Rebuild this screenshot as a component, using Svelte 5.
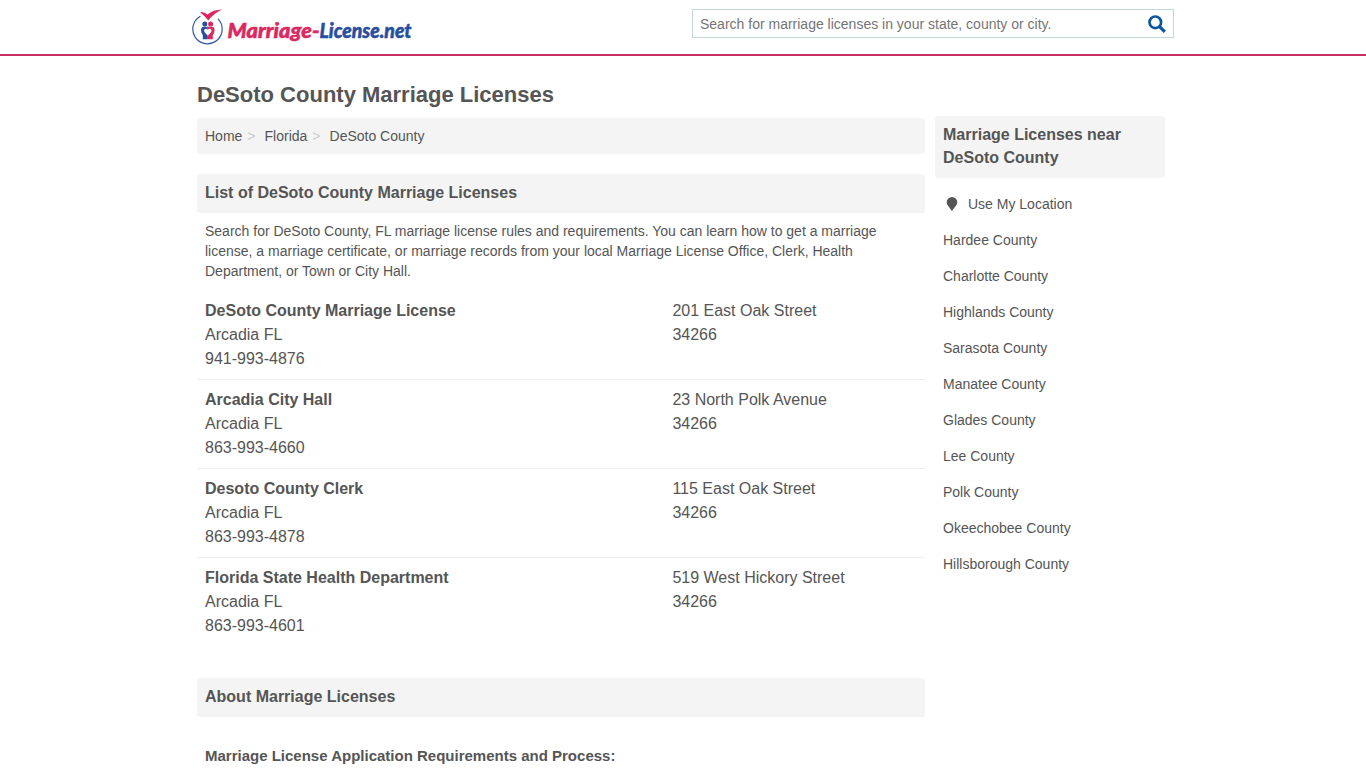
<script>
  const crumbs = ['Home', 'Florida', 'DeSoto County'];
  const offices = [
    { name: 'DeSoto County Marriage License', city: 'Arcadia FL', phone: '941-993-4876', street: '201 East Oak Street', zip: '34266' },
    { name: 'Arcadia City Hall', city: 'Arcadia FL', phone: '863-993-4660', street: '23 North Polk Avenue', zip: '34266' },
    { name: 'Desoto County Clerk', city: 'Arcadia FL', phone: '863-993-4878', street: '115 East Oak Street', zip: '34266' },
    { name: 'Florida State Health Department', city: 'Arcadia FL', phone: '863-993-4601', street: '519 West Hickory Street', zip: '34266' }
  ];
  const nearby = ['Hardee County', 'Charlotte County', 'Highlands County', 'Sarasota County', 'Manatee County', 'Glades County', 'Lee County', 'Polk County', 'Okeechobee County', 'Hillsborough County'];
</script>

<div class="page">
  <header>
    <div class="bar">
      <svg class="logo" width="224" height="40" viewBox="0 0 224 40" role="img" aria-label="Marriage-License.net">
        <path d="M8.4 7.2A14.7 14.7 0 1 0 26 9.8" fill="none" stroke="#3558a0" stroke-width="1.2" />
        <path d="M8.2 3.2Q12 2.4 15.4 5.6Q21 .8 30 .6Q21.8 4.6 16.3 11.4Q13 7.2 8.2 3.2Z" fill="#dc2860" />
        <circle cx="12.8" cy="14.9" r="2.5" fill="#284f9e" />
        <circle cx="18.6" cy="14.9" r="2.5" fill="#dc2860" />
        <path d="M9 21Q9.2 17.7 11.6 17.7H15.8V30.3H10.8V26Q9.1 24 9 21Z" fill="#284f9e" />
        <path d="M22.6 21Q22.4 17.7 20 17.7H15.8V30.3H20.8V26Q22.5 24 22.6 21Z" fill="#dc2860" />
        <path d="M15.8 26.4Q12.1 23.8 12.1 21.5Q12.2 19.6 13.9 19.7Q15.2 19.8 15.8 21Q16.4 19.8 17.7 19.7Q19.4 19.6 19.5 21.5Q19.5 23.8 15.8 26.4Z" fill="#fff" />
        <text x="35.5" y="28.5" textLength="92" lengthAdjust="spacingAndGlyphs" fill="#dc2860" stroke="#dc2860">Marriage-</text>
        <text x="127.5" y="28.5" textLength="92" lengthAdjust="spacingAndGlyphs" fill="#284f9e" stroke="#284f9e">License.net</text>
      </svg>
      <div class="search">
        <span>Search for marriage licenses in your state, county or city.</span>
        <svg width="18" height="18" viewBox="0 0 18 18" fill="none" stroke="#0d55a0">
          <circle cx="7.3" cy="7.3" r="5.8" stroke-width="2.7" />
          <path d="M11.6 11.6L16.8 16.8" stroke-width="3.2" />
        </svg>
      </div>
    </div>
  </header>

  <div class="container">
    <h1>DeSoto County Marriage Licenses</h1>
    <div class="columns">
      <main>
        <nav>
          {#each crumbs as crumb, i}
            <span>{crumb}</span>{#if i < crumbs.length - 1}<i>&gt;</i>{/if}
          {/each}
        </nav>
        <h2>List of DeSoto County Marriage Licenses</h2>
        <p>Search for DeSoto County, FL marriage license rules and requirements. You can learn how to get a marriage license, a marriage certificate, or marriage records from your local Marriage License Office, Clerk, Health Department, or Town or City Hall.</p>
        <div class="offices">
          {#each offices as office}
            <div class="office">
              <div class="who">
                <strong>{office.name}</strong>
                <span>{office.city}</span>
                <span>{office.phone}</span>
              </div>
              <div class="where">
                <span>{office.street}</span>
                <span>{office.zip}</span>
              </div>
            </div>
          {/each}
        </div>
        <h2 class="about">About Marriage Licenses</h2>
        <h3>Marriage License Application Requirements and Process:</h3>
      </main>
      <aside>
        <h2>Marriage Licenses near DeSoto County</h2>
        <ul>
          <li>
            <svg width="12" height="14" viewBox="0 0 12 14"><path d="M6 0A5.3 5.3 0 0 1 11.3 5.3C11.3 8 8.5 10.5 6 14C3.5 10.5.7 8 .7 5.3A5.3 5.3 0 0 1 6 0Z" fill="#555" /></svg>
            Use My Location
          </li>
          {#each nearby as county}
            <li>{county}</li>
          {/each}
        </ul>
      </aside>
    </div>
  </div>
</div>

<style>
  .page {
    height: 768px;
    overflow: hidden;
    background: #fff;
    color: #555;
    font: 14px/20px "Liberation Sans", Arial, sans-serif;
  }
  .page * { box-sizing: border-box; }
  header { height: 56px; border-bottom: 2px solid #c52f63; }
  .bar {
    display: flex;
    justify-content: space-between;
    width: 982px;
    margin-left: 192px;
    padding-top: 9px;
  }
  .logo text {
    font: italic 900 20px Lato, sans-serif;
    stroke-width: 0.5px;
  }
  .search {
    display: flex;
    align-items: center;
    justify-content: space-between;
    width: 482px;
    height: 29px;
    padding: 0 7px;
    border: 1px solid #c5d5dc;
    color: #757575;
  }
  .container { width: 968px; margin-left: 197px; padding-top: 23px; }
  h1 { margin: 0; font-size: 22px; line-height: 32px; height: 37px; }
  .columns { display: flex; gap: 10px; }
  main { width: 728px; padding-top: 2px; }
  aside { width: 230px; }
  nav {
    display: flex;
    align-items: center;
    height: 36px;
    padding: 0 8px;
    background: #f4f4f4;
    border-radius: 3px;
  }
  nav i { margin: 0 9px 0 5px; color: #ccc; font-style: normal; font-size: 14px; }
  h2 {
    margin: 20px 0 0;
    padding: 7px 8px 9px;
    background: #f4f4f4;
    border-radius: 3px;
    font-size: 16px;
    line-height: 23px;
  }
  p { margin: 8px 0 10px; padding: 0 8px; }
  .office {
    display: flex;
    padding: 8px;
    border-bottom: 1px solid #eee;
    font-size: 16px;
    line-height: 24px;
  }
  .office:last-child { border-bottom: 0; }
  .who, .where { display: flex; flex-direction: column; }
  .who { width: 467.4px; }
  .about { margin-top: 32px; }
  h3 { margin: 29px 0 0; padding: 0 8px; font-size: 15px; line-height: 20px; }
  aside h2 { margin: 0; }
  ul { margin: 8px 0 0; padding: 0 8px; list-style: none; }
  li { display: flex; align-items: center; height: 36px; }
  li svg { margin: 0 10px 0 3px; }
</style>
